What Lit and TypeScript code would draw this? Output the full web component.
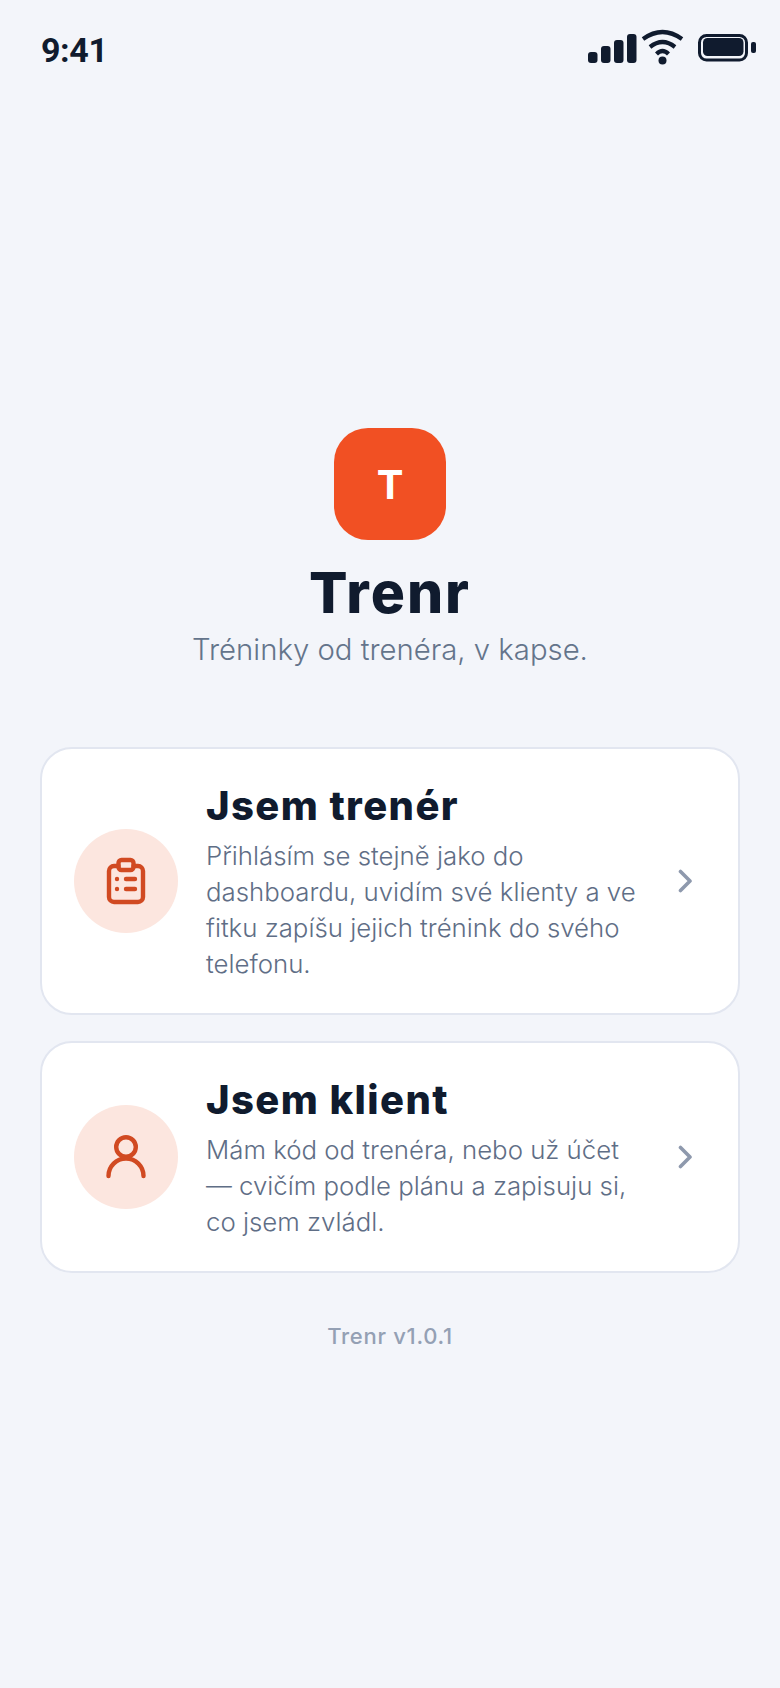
import { LitElement, html, css, svg } from "lit";
import { customElement } from "lit/decorators.js";

const chevron = svg`<path d="M2.5 2.5 L12 12 L2.5 21.5" fill="none" stroke="#8e99ad" stroke-width="3.6" stroke-linecap="round" stroke-linejoin="round"/>`;

@customElement("app-root")
export class AppRoot extends LitElement {
  static styles = css`
    :host { display: block; width: 780px; height: 1688px; background: #f3f5fa; font-family: Inter, "Noto Sans", sans-serif; color: #101b2e; overflow: hidden; }
    .status { height: 100px; padding: 0 20px 0 41px; display: flex; align-items: center; justify-content: space-between; box-sizing: border-box; }
    .time { font-family: Roboto, sans-serif; font-weight: 700; font-size: 34px; letter-spacing: -0.4px; line-height: 1; }
    .sys { display: block; }
    main { padding: 328px 40px 0; display: flex; flex-direction: column; align-items: center; }
    .logo { width: 112px; height: 112px; border-radius: 34px; background: #f15023; color: #fff; font-weight: 700; font-size: 40px; display: flex; align-items: center; justify-content: center; }
    h1 { margin: 18px 0 0; font-size: 57px; line-height: 70px; font-weight: 800; letter-spacing: 2px; }
    .tag { margin: 0; font-size: 29.3px; line-height: 44px; color: #64748b; font-weight: 300; }
    .cards { width: 100%; display: flex; flex-direction: column; gap: 26px; margin-top: 75px; }
    .card { box-sizing: border-box; width: 100%; background: #fff; border: 2px solid #e2e6f0; border-radius: 32px; padding: 31px 32px; display: flex; align-items: center; }
    .circle { width: 104px; height: 104px; border-radius: 50%; background: #fce6df; flex: none; display: flex; align-items: center; justify-content: center; }
    .body { flex: 1; margin-left: 28px; min-width: 0; }
    h2 { margin: 0; font-size: 40px; line-height: 52px; font-weight: 800; letter-spacing: 1.4px; }
    p { margin: 6px 0 0; font-size: 25.8px; line-height: 36px; color: #5f6e86; width: 440px; font-weight: 350; }
    .chev { flex: none; margin-left: 18px; margin-right: 12px; }
    .ver { margin-top: 48px; font-size: 22px; line-height: 30px; font-weight: 500; color: #94a0b4; letter-spacing: 0.7px; }
  `;
  render() {
    return html`
      <div class="status">
        <span class="time">9:41</span>
        <svg class="sys" width="180" height="60" viewBox="0 0 180 60">
          <rect x="8" y="32" width="9.5" height="11" rx="3" fill="#101b2e"/>
          <rect x="21" y="26" width="9.5" height="17" rx="3" fill="#101b2e"/>
          <rect x="34" y="20" width="9.5" height="23" rx="3" fill="#101b2e"/>
          <rect x="47" y="14" width="9.5" height="29" rx="3" fill="#101b2e"/>
          <path d="M63 19 Q82.5 5 102 19 M70 27 Q82.5 17 95 27 M76.5 34 Q82.5 28 88.5 34" fill="none" stroke="#101b2e" stroke-width="4.2"/>
          <circle cx="82.5" cy="40.5" r="4" fill="#101b2e"/>
          <rect x="119.5" y="15.5" width="47" height="24.5" rx="7" fill="none" stroke="#101b2e" stroke-width="3"/>
          <rect x="123" y="18" width="40.5" height="18" rx="4.5" fill="#101b2e"/>
          <rect x="171" y="22" width="5" height="11" rx="2" fill="#101b2e"/>
        </svg>
      </div>
      <main>
        <div class="logo">T</div>
        <h1>Trenr</h1>
        <div class="tag">Tréninky od trenéra, v kapse.</div>
        <div class="cards">
          <div class="card">
            <div class="circle">
              <svg width="52" height="52" viewBox="0 0 52 52" fill="none" stroke="#d14a22" stroke-width="4.4" stroke-linecap="round" stroke-linejoin="round">
                <path d="M18.5 11H14a5 5 0 0 0-5 5v26a5 5 0 0 0 5 5h24a5 5 0 0 0 5-5V16a5 5 0 0 0-5-5h-4.5"/>
                <rect x="18.5" y="5" width="15" height="10" rx="3"/>
                <path d="M26 24h9M26 34h9M17 24h.01M17 34h.01"/>
              </svg>
            </div>
            <div class="body">
              <h2>Jsem trenér</h2>
              <p>Přihlásím se stejně jako do dashboardu, uvidím své klienty a ve fitku zapíšu jejich trénink do svého telefonu.</p>
            </div>
            <svg class="chev" width="16" height="24" viewBox="0 0 16 24">${chevron}</svg>
          </div>
          <div class="card">
            <div class="circle">
              <svg width="52" height="52" viewBox="0 0 52 52" fill="none" stroke="#d14a22" stroke-width="4.4" stroke-linecap="round" stroke-linejoin="round">
                <circle cx="26" cy="16" r="9.8"/>
                <path d="M8.5 45a17.5 17.5 0 0 1 35 0"/>
              </svg>
            </div>
            <div class="body">
              <h2>Jsem klient</h2>
              <p>Mám kód od trenéra, nebo už účet — cvičím podle plánu a zapisuju si, co jsem zvládl.</p>
            </div>
            <svg class="chev" width="16" height="24" viewBox="0 0 16 24">${chevron}</svg>
          </div>
        </div>
        <div class="ver">Trenr v1.0.1</div>
      </main>
    `;
  }
}
